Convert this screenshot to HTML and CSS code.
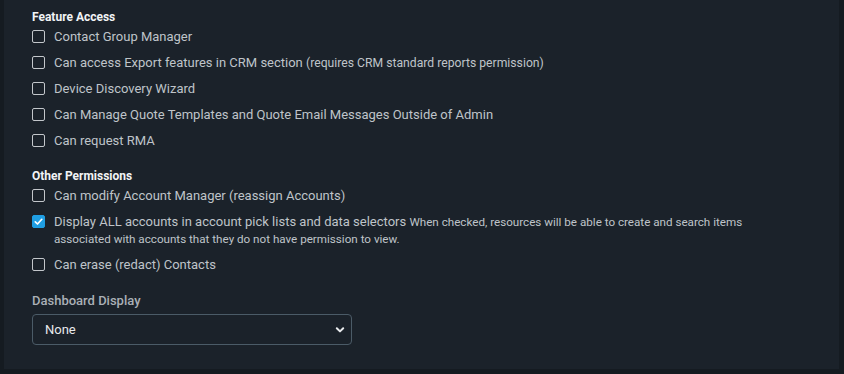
FILE: index.html
```html
<!DOCTYPE html>
<html>
<head>
<meta charset="utf-8">
<link rel="stylesheet" href="styles.css">
</head>
<body>
<div class="panel">
  <div class="section">
    <div class="heading">Feature Access</div>
    <div class="row"><span class="box"></span><span class="label">Contact Group Manager</span></div>
    <div class="row"><span class="box"></span><span class="label">Can access Export features in CRM section <span class="note">(requires CRM standard reports permission)</span></span></div>
    <div class="row"><span class="box"></span><span class="label">Device Discovery Wizard</span></div>
    <div class="row"><span class="box"></span><span class="label">Can Manage Quote Templates and Quote Email Messages Outside of Admin</span></div>
    <div class="row"><span class="box"></span><span class="label">Can request RMA</span></div>
  </div>
  <div class="section second">
    <div class="heading">Other Permissions</div>
    <div class="row"><span class="box"></span><span class="label">Can modify Account Manager (reassign Accounts)</span></div>
    <div class="row tall"><span class="box checked"><svg viewBox="0 0 13 13" width="13" height="13"><path d="M3.3 6.8 L5.5 9 L9.8 4.3" fill="none" stroke="#fff" stroke-width="1.7" stroke-linecap="round" stroke-linejoin="round"/></svg></span><span class="label">Display ALL accounts in account pick lists and data selectors <span class="note desc">When checked, resources will be able to create and search items associated with accounts that they do not have permission to view.</span></span></div>
    <div class="row"><span class="box"></span><span class="label">Can erase (redact) Contacts</span></div>
  </div>
  <div class="field">
    <div class="field-label">Dashboard Display</div>
    <div class="select">
      <span class="select-value">None</span>
      <svg class="chev" viewBox="0 0 10 8" width="10" height="8"><path d="M1.8 2.2 L5 5.4 L8.2 2.2" fill="none" stroke="#e8eaec" stroke-width="2" stroke-linecap="round" stroke-linejoin="round"/></svg>
    </div>
  </div>
</div>
</body>
</html>
```

FILE: styles.css
```css
html, body {
  margin: 0;
  padding: 0;
  background: #151b21;
  height: 374px;
  overflow: hidden;
}
body {
  font-family: Roboto, "Liberation Sans", sans-serif;
  color: #bfc4c9;
}
.panel {
  margin-left: 4px;
  width: 835px;
  height: 369px;
  background: #1b222a;
  padding: 10px 0 0 28px;
  box-sizing: border-box;
}
.second {
  margin-top: 15px;
}
.heading {
  font-size: 12px;
  font-weight: 700;
  line-height: 14px;
  color: #f2f4f6;
}
.row {
  display: flex;
  align-items: flex-start;
  padding: 5px 0;
  font-size: 13px;
  line-height: 16px;
  max-width: 740px;
}
.row.tall {
  line-height: 17px;
  padding: 4px 0 5px;
}
.box {
  flex: none;
  width: 13px;
  height: 13px;
  box-sizing: border-box;
  border: 1px solid #c3c7cb;
  border-radius: 2px;
  margin-top: 1px;
  margin-right: 9px;
  display: flex;
}
.row.tall .box {
  margin-top: 2px;
}
.box.checked {
  background: #1f9ee3;
  border-color: #1f9ee3;
}
.box.checked svg {
  margin: -1px;
}
.note {
  font-size: 12.2px;
  line-height: 14px;
}
.note.desc {
  font-size: 11.65px;
}
.field {
  margin-top: 15px;
}
.field-label {
  font-size: 13px;
  font-weight: 500;
  line-height: 16px;
  color: #aab0b6;
}
.select {
  margin-top: 5px;
  width: 320px;
  height: 31px;
  box-sizing: border-box;
  border: 1px solid #4b5b67;
  border-radius: 4px;
  display: flex;
  align-items: center;
  justify-content: space-between;
  padding: 0 6px 0 12px;
}
.select-value {
  font-size: 13px;
  color: #e8eaec;
}
.chev {
  display: block;
}
```
